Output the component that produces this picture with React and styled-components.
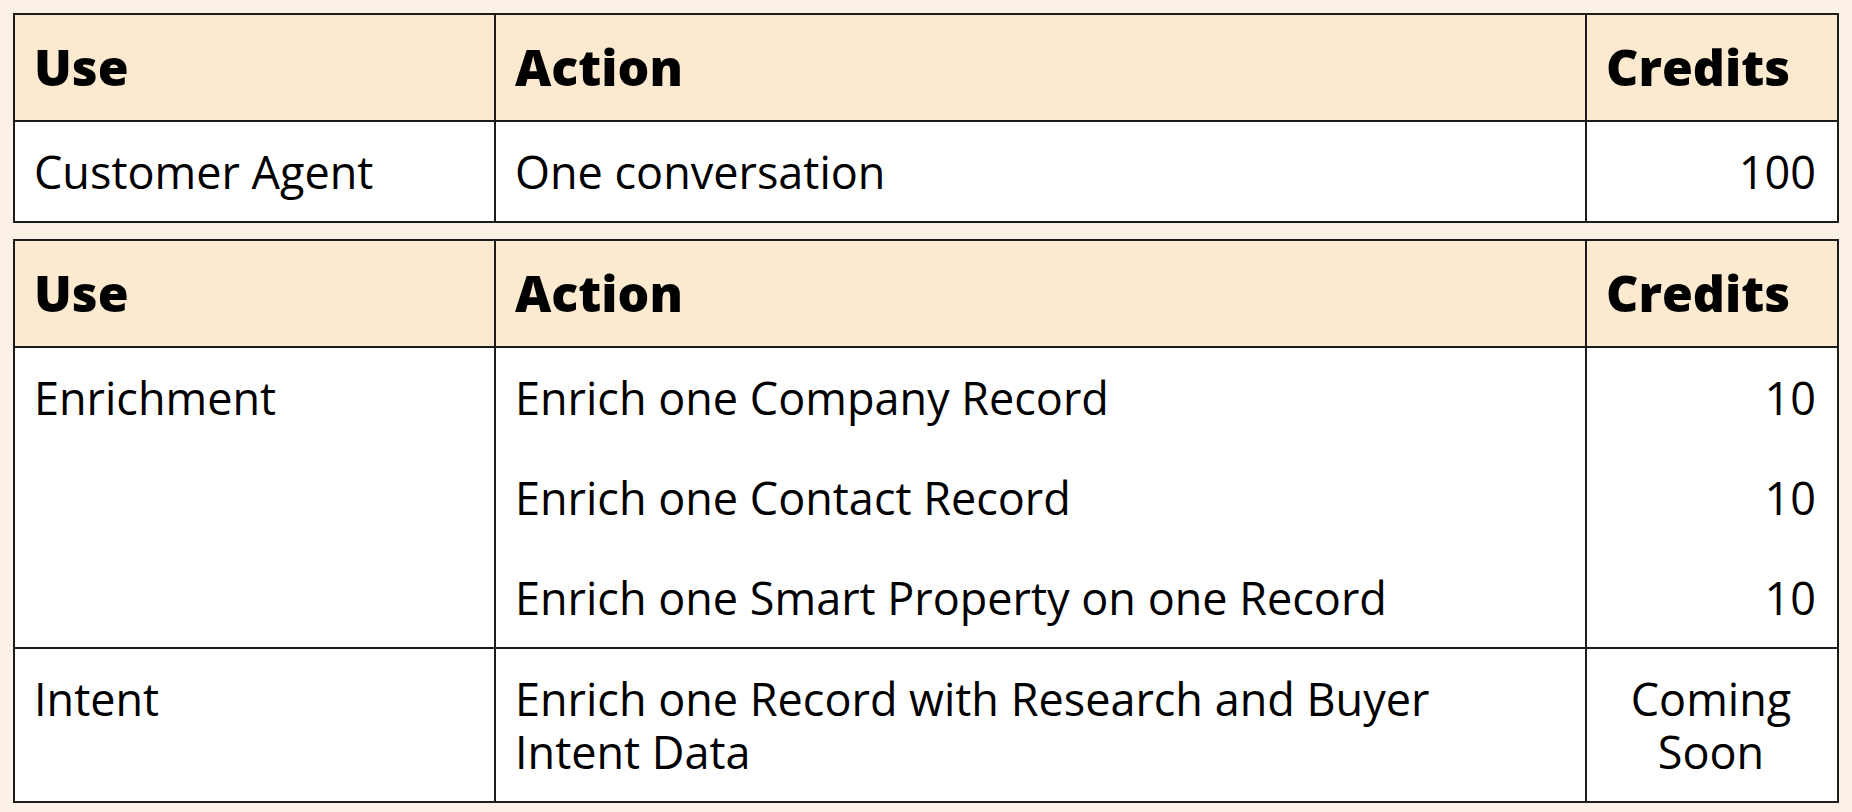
import React from "react";
import styled, { createGlobalStyle } from "styled-components";

const GlobalStyle = createGlobalStyle`
  html, body {
    margin: 0;
    background: #fbf1e7;
  }
  body {
    font-family: "Open Sans", "Noto Sans", sans-serif;
    color: #000;
  }
`;

const Page = styled.div`
  display: flex;
  flex-direction: column;
  gap: 16px;
  padding: 13px 13px 12px;
`;

const Table = styled.table`
  width: 100%;
  border-collapse: collapse;
  table-layout: fixed;
  background: #fff;
  border: 2px solid #1c1c1c;
`;

const HeadCell = styled.th`
  background: #fcead0;
  border: 2px solid #1c1c1c;
  padding: 24px 21px 24px 19px;
  text-align: left;
  font-size: 50px;
  line-height: 57px;
  font-weight: 800;
`;

const Cell = styled.td`
  border: 2px solid #1c1c1c;
  padding: 23px 21px 23px 19px;
  vertical-align: top;
  font-size: 45px;
  line-height: 53px;
  font-weight: ${(p) => (p.$label ? 500 : 400)};
  text-align: ${(p) => p.$align || "left"};
`;

const Stack = styled.div`
  display: flex;
  flex-direction: column;
  gap: 47px;
`;

const tables = [
  [
    {
      use: "Customer Agent",
      actions: [["One conversation", "100"]],
    },
  ],
  [
    {
      use: "Enrichment",
      actions: [
        ["Enrich one Company Record", "10"],
        ["Enrich one Contact Record", "10"],
        ["Enrich one Smart Property on one Record", "10"],
      ],
    },
    {
      use: "Intent",
      actions: [["Enrich one Record with Research and Buyer Intent Data", "Coming Soon"]],
      soon: true,
    },
  ],
];

const CreditsTable = ({ rows }) => (
  <Table>
    <colgroup>
      <col style={{ width: 481 }} />
      <col style={{ width: 1091 }} />
      <col />
    </colgroup>
    <thead>
      <tr>
        <HeadCell>Use</HeadCell>
        <HeadCell>Action</HeadCell>
        <HeadCell>Credits</HeadCell>
      </tr>
    </thead>
    <tbody>
      {rows.map((row) => (
        <tr key={row.use}>
          <Cell $label>{row.use}</Cell>
          <Cell>
            <Stack>
              {row.actions.map(([action]) => (
                <div key={action}>{action}</div>
              ))}
            </Stack>
          </Cell>
          <Cell $align={row.soon ? "center" : "right"}>
            <Stack>
              {row.actions.map(([action, credits]) => (
                <div key={action}>{credits}</div>
              ))}
            </Stack>
          </Cell>
        </tr>
      ))}
    </tbody>
  </Table>
);

export default function App() {
  return (
    <>
      <GlobalStyle />
      <Page>
        {tables.map((rows, i) => (
          <CreditsTable key={i} rows={rows} />
        ))}
      </Page>
    </>
  );
}
